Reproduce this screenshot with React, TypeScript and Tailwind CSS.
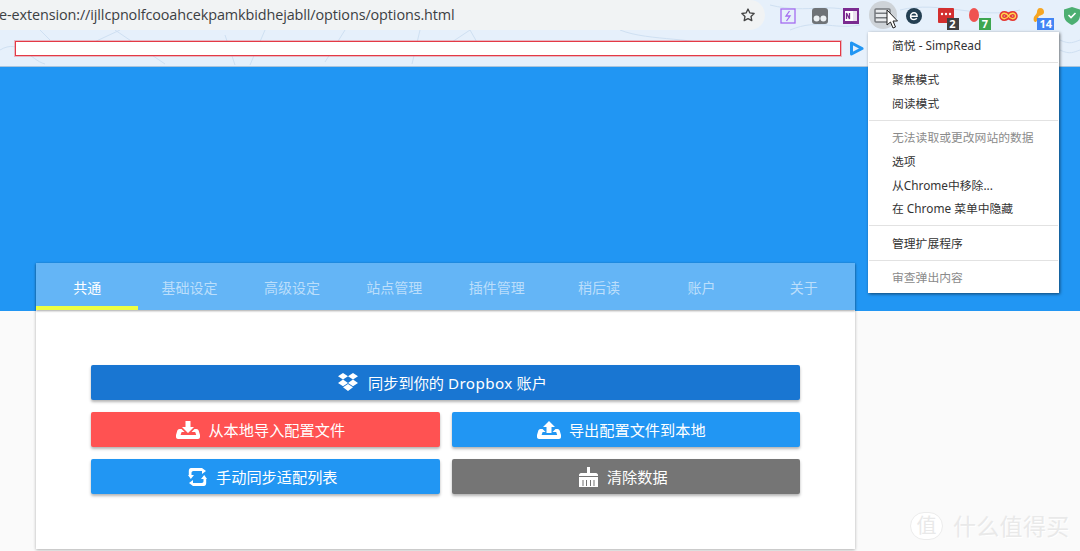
import { ReactNode } from "react";

const font = { fontFamily: '"Noto Sans", "Noto Sans CJK SC", sans-serif' };

const tabs = ["共通", "基础设定", "高级设定", "站点管理", "插件管理", "稍后读", "账户", "关于"];

const Badge = ({ label, className }: { label: string; className: string }) => (
  <span className={`absolute top-[10px] h-[12px] min-w-[12px] px-[2px] text-center text-[11px] leading-[12px] font-bold text-white ${className}`}>
    {label}
  </span>
);

const ExtIcon = ({ children, badge, badgeClass }: { children: ReactNode; badge?: string; badgeClass?: string }) => (
  <div className="relative flex w-[16px] h-[16px] items-center justify-center">
    {children}
    {badge && <Badge label={badge} className={badgeClass ?? ""} />}
  </div>
);

const Toolbar = () => (
  <div className="relative h-[67px] shrink-0 bg-[#e6f0fb] border-b border-[#a9c4dc] overflow-hidden">
    <svg className="absolute inset-0" width="1080" height="67" fill="none" stroke="#cfe0f2" strokeWidth="1">
      <path d="M0 50c20-12 30 10 45 14M40 30l10 10M120 30l-30 14M115 30l50 34M225 35l10 30M265 30l-15 35M345 30l-20 32M420 30l-8 34M440 50l30-20 8 14M620 30c30 12 80 6 100 20M770 5c40 10 60-5 90 10M790 30c30-12 40 0 70-5M900 10c40-10 80 10 120 0M1060 40c10 5 14 2 20 0M1060 50c10 5 14 2 20 0" />
    </svg>
    <div className="relative flex h-[30px] items-center">
      <div className="flex h-[30px] w-[765px] shrink-0 items-center justify-between rounded-r-[15px] bg-[#f1f3f4] pr-[9px]">
        <span className="-ml-px text-[14.4px] tracking-[-0.1px] text-[#3c4043] whitespace-nowrap" style={{ fontFamily: '"Open Sans", sans-serif' }}>
          e-extension://ijllcpnolfcooahcekpamkbidhejabll/options/options.html
        </span>
        <svg width="16" height="16" viewBox="0 0 24 24" fill="none" stroke="#444" strokeWidth="2" strokeLinejoin="round">
          <path d="M12 3l2.800 5.900 6.400.8-4.700 4.400 1.200 6.400L12 17.400l-5.700 3.100 1.200-6.400-4.700-4.400 6.400-.8z" />
        </svg>
      </div>
      <div className="flex items-center pl-[15px] pt-[2px] gap-[15.5px]">
        <ExtIcon>
          <svg width="16" height="16" viewBox="0 0 16 16" fill="none" stroke="#a56cf0" strokeWidth="1.300">
            <rect x="1" y="1" width="14" height="14" />
            <path d="M9.500 3L6 8h4l-3.500 5" />
          </svg>
        </ExtIcon>
        <ExtIcon>
          <svg width="16" height="16" viewBox="0 0 16 16">
            <rect width="16" height="16" rx="3" fill="#6f7377" />
            <circle cx="4.600" cy="10.500" r="3" fill="#eef2f5" />
            <circle cx="11.400" cy="10.500" r="3" fill="#eef2f5" />
          </svg>
        </ExtIcon>
        <ExtIcon>
          <svg width="16" height="16" viewBox="0 0 16 16">
            <rect width="16" height="16" fill="#7b2a90" />
            <rect x="9" y="3" width="5" height="10" fill="#fff" opacity="0.85" />
            <rect x="2" y="3" width="8" height="10" fill="#fff" />
            <path d="M3.500 11V5l3 6V5" fill="none" stroke="#7b2a90" strokeWidth="1.300" />
          </svg>
        </ExtIcon>
        <div className="-mx-[6px] -mt-[2px] flex h-[28px] w-[28px] items-center justify-center rounded-full bg-[#ced3d8]">
          <svg width="17" height="15" viewBox="0 0 17 15" fill="none" stroke="#767a7e" strokeWidth="1.500">
            <rect x="1" y="1" width="15" height="13" rx="1" fill="#e8eaec" />
            <path d="M1 5.300h15M1 9.700h15" />
          </svg>
        </div>
        <ExtIcon>
          <svg width="16" height="16" viewBox="0 0 16 16" fill="none">
            <circle cx="8" cy="8" r="8" fill="#243f52" />
            <path d="M4.500 8.200h6.600c0-2-1.300-3.400-3.100-3.400S4.600 6.200 4.600 8.200 6 11.500 8 11.500c1.200 0 2.200-.5 2.800-1.200" stroke="#fff" strokeWidth="1.500" />
          </svg>
        </ExtIcon>
        <ExtIcon badge="2" badgeClass="bg-[#404040] -right-[5px]">
          <svg width="16" height="16" viewBox="0 0 16 16">
            <rect width="16" height="15" rx="1" fill="#d32f2f" />
            <circle cx="4" cy="6" r="1.200" fill="#fff" />
            <circle cx="8" cy="6" r="1.200" fill="#fff" />
            <circle cx="12" cy="6" r="1.200" fill="#fff" />
          </svg>
        </ExtIcon>
        <ExtIcon badge="7" badgeClass="bg-[#3ea650] -right-[6px]">
          <svg width="16" height="18" viewBox="0 0 16 18">
            <ellipse cx="5" cy="8" rx="5" ry="7" fill="#ef5350" />
          </svg>
        </ExtIcon>
        <ExtIcon>
          <svg className="shrink-0" width="19" height="14" viewBox="0 0 19 14" fill="none">
            <path d="M9.500 7C7.500 3.600 2.500 3.200 2.500 7s5 3.400 7 0c2-3.400 7-3.800 7 0s-5 3.400-7 0z" stroke="#e53935" strokeWidth="4.500" />
            <path d="M9.500 7C7.500 3.600 2.500 3.200 2.500 7s5 3.400 7 0c2-3.400 7-3.800 7 0s-5 3.400-7 0z" stroke="#ffd54f" strokeWidth="1.400" />
          </svg>
        </ExtIcon>
        <ExtIcon badge="14" badgeClass="bg-[#4285f4] -right-[6px]">
          <svg width="16" height="18" viewBox="0 0 16 18">
            <path d="M8 1c3 0 4 2 4 4 0 3-3 3-5 4-1 1-1 4-3 6-2 0-3-2-2-5 1-2 3-3 3-5 0-2 1-4 3-4z" fill="#f6a623" />
          </svg>
        </ExtIcon>
        <ExtIcon>
          <svg width="16" height="18" viewBox="0 0 16 18">
            <path d="M8 0l8 2.500v6c0 4.500-3.500 7.500-8 9.500-4.500-2-8-5-8-9.500v-6z" fill="#4caf72" />
            <path d="M4.500 8l2.500 2.500 4.500-4.500" fill="none" stroke="#fff" strokeWidth="1.600" />
          </svg>
        </ExtIcon>
      </div>
    </div>
    <div className="relative flex h-[36px] items-start pl-[15px] pt-[11px]">
      <div className="h-[15px] w-[826px] border border-[#e53945] bg-white shadow-[0_0_0_1px_rgba(229,57,69,0.3)]" />
      <svg className="ml-[9px]" width="14" height="15" viewBox="0 0 14 15" fill="none" stroke="#2196f3" strokeWidth="3">
        <path d="M1.500 2v11L12 7.500z" strokeLinejoin="round" />
      </svg>
    </div>
  </div>
);

const ContextMenu = () => {
  const Sep = () => <div className="mt-[4.3px] mb-[5.3px] h-px bg-[#e2e2e2] mx-px" />;
  const Item = ({ text, muted }: { text: string; muted?: boolean }) => (
    <div className={`flex h-[23.7px] items-center pl-[24px] text-[11.8px] whitespace-nowrap ${muted ? "text-[#8a8a8a]" : "text-[#333]"}`}>{text}</div>
  );
  return (
    <div className="absolute left-[868px] top-[32px] w-[191px] bg-white pt-[2px] pb-[3px] shadow-[1px_1px_3px_rgba(0,0,0,0.55)]" style={font}>
      <Item text="简悦 - SimpRead" />
      <Sep />
      <Item text="聚焦模式" />
      <Item text="阅读模式" />
      <Sep />
      <Item text="无法读取或更改网站的数据" muted />
      <Item text="选项" />
      <Item text="从Chrome中移除..." />
      <Item text="在 Chrome 菜单中隐藏" />
      <Sep />
      <Item text="管理扩展程序" />
      <Sep />
      <Item text="审查弹出内容" muted />
    </div>
  );
};

const DropboxIcon = () => (
  <svg width="20" height="19" viewBox="0 0 20 19" fill="#fff">
    <path d="M5 0l5 3.300L5 6.600 0 3.300zM15 0l5 3.300-5 3.300-5-3.300zM5 6.600l5 3.300-5 3.300-5-3.300zM15 6.600l5 3.300-5 3.300-5-3.300zM5 14.300l5-3.200 5 3.200-5 3.700z" />
  </svg>
);

const TrayIcon = ({ up }: { up?: boolean }) => (
  <svg width="24" height="18" viewBox="0 0 24 18" fill="#fff">
    <path d="M5.500 8H3.500C2 8 1.500 9 1.200 10L0 14v2c0 1 1 2 2 2h20c1 0 2-1 2-2v-2l-1.200-4c-.3-1-.8-2-2.300-2h-2l-3 3h3.700l1 3H4.600l1-3h3z" />
    {up ? <path d="M12 0l6 6h-3.500v6h-5V6H6z" /> : <path d="M9.500 0h5v6H18l-6 6-6-6h3.500z" />}
  </svg>
);

const SyncIcon = () => (
  <svg width="19" height="18" viewBox="0 0 19 18" fill="#fff">
    <path d="M3 0h11v3H5.500C4 3 3.500 4 3.500 5v2H6L2.800 11 0 7h.8V3c0-2 1-3 2.200-3zM16 18H5v-3h8.500c1.500 0 2-1 2-2v-2H13l3.200-4L19 11h-.8v4c0 2-1 3-2.200 3z" />
    <path d="M14 0l4 3-4 3zM5 12l-4 3 4 3z" />
  </svg>
);

const BroomIcon = () => (
  <svg width="19" height="20" viewBox="0 0 19 20" fill="#fff">
    <path d="M8 0h3v6h6c1 0 2 1 2 2v1H0V8c0-1 1-2 2-2h6z" />
    <path d="M0 10h19v10H0zM3.500 13v6h1v-6zM7 13v6h1v-6zM11 13v6h1v-6zM14.500 13v6h1v-6z" fillRule="evenodd" />
  </svg>
);

const ActionButton = ({ icon, label, className, gap = "gap-[8px]" }: { icon: ReactNode; label: ReactNode; className: string; gap?: string }) => (
  <button className={`flex h-[35px] items-center justify-center rounded-[2px] pr-[9px] text-[15.2px] text-white shadow-[0_2px_3px_rgba(0,0,0,0.3)] ${gap} ${className}`}>
    {icon}
    <span className="pt-px">{label}</span>
  </button>
);

export default function App() {
  return (
    <div className="relative flex h-[551px] w-[1080px] flex-col overflow-hidden bg-[#fafafa]" style={font}>
      <Toolbar />
      <div className="h-[244px] shrink-0 bg-[#2196f3]" />
      <div className="relative -mt-[48px] ml-[36px] w-[819px] bg-white shadow-[0_1px_3px_rgba(0,0,0,0.3)]">
        <div className="flex h-[47px] bg-[#64b5f6] shadow-[0_1px_2px_rgba(0,0,0,0.35)]">
          {tabs.map((tab, i) => (
            <div
              key={tab}
              className={`flex flex-1 items-center justify-center border-b-[4px] pt-[6px] text-[14px] ${i === 0 ? "border-[#eeff41] text-white" : "border-transparent text-[#bbdefb]"}`}
            >
              {tab}
            </div>
          ))}
        </div>
        <div className="grid grid-cols-2 gap-x-[12px] gap-y-[12px] px-[55px] pt-[55px] pb-[55px]">
          <ActionButton
            className="col-span-2 bg-[#1976d2] pl-[3px]"
            gap="gap-[10px]"
            icon={<DropboxIcon />}
            label={<>同步到你的 <span className="tracking-[0.4px]">Dropbox</span> 账户</>}
          />
          <ActionButton className="bg-[#ff5252]" icon={<TrayIcon />} label="从本地导入配置文件" />
          <ActionButton className="bg-[#2196f3]" icon={<TrayIcon up />} label="导出配置文件到本地" />
          <ActionButton className="bg-[#2196f3] pl-[4px]" gap="gap-[9px]" icon={<SyncIcon />} label="手动同步适配列表" />
          <ActionButton className="bg-[#757575] pl-[4px]" gap="gap-[9px]" icon={<BroomIcon />} label="清除数据" />
        </div>
      </div>
      <ContextMenu />
      <svg className="absolute left-[886px] top-[9px]" width="13" height="21" viewBox="0 0 13 21">
        <path d="M1 1v15l3.500-3 2.500 6 2.500-1-2.500-6h4.500z" fill="#fff" stroke="#222" strokeWidth="1" />
      </svg>
      <div className="absolute left-[910px] top-[512px] flex items-center gap-[10px] text-[#e9e9e9] [text-shadow:1px_1px_0_#fff]">
        <div className="flex h-[28px] w-[33px] items-center justify-center rounded-full border border-[#ececec] bg-white text-[20px] leading-none">值</div>
        <span className="text-[23px] leading-none tracking-[0.3px] whitespace-nowrap">什么值得买</span>
      </div>
    </div>
  );
}
